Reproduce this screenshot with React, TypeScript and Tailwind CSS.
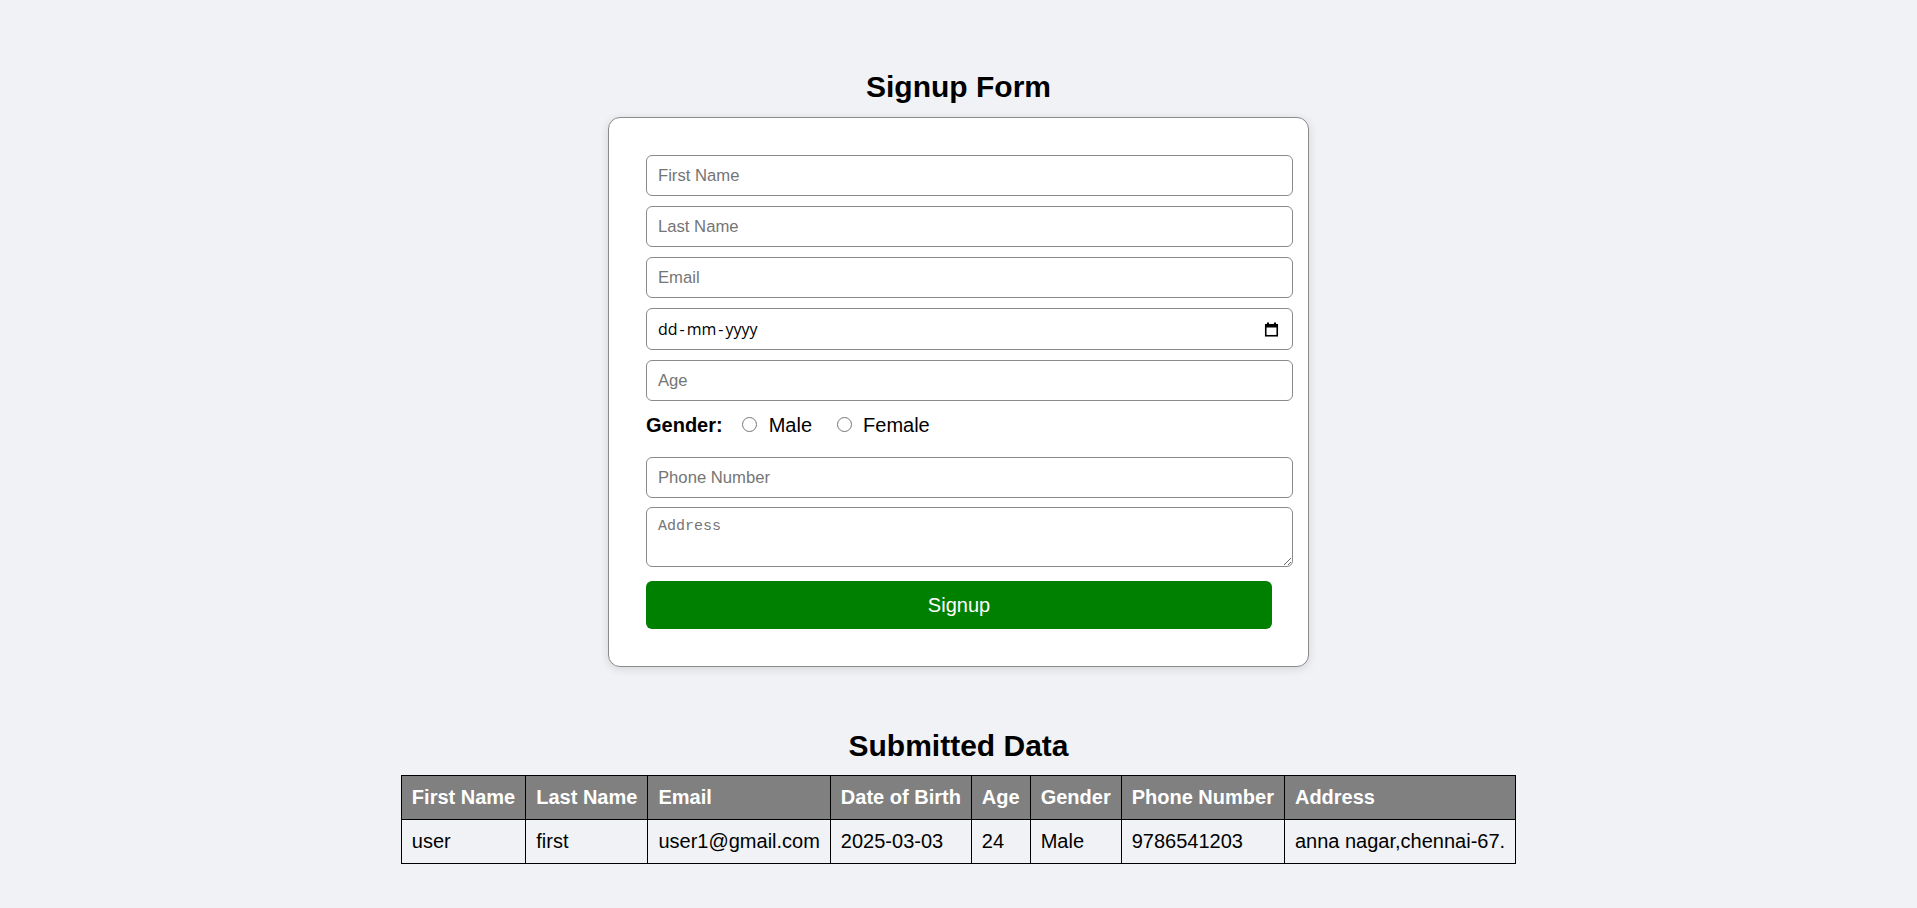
import React from "react";

const headers = [
  "First Name",
  "Last Name",
  "Email",
  "Date of Birth",
  "Age",
  "Gender",
  "Phone Number",
  "Address",
];

const row = [
  "user",
  "first",
  "user1@gmail.com",
  "2025-03-03",
  "24",
  "Male",
  "9786541203",
  "anna nagar,chennai-67.",
];

function TextInput({ placeholder }: { placeholder: string }) {
  return (
    <input
      type="text"
      placeholder={placeholder}
      className="block h-[41px] w-full rounded-[6px] border border-[#8a8a8a] bg-white px-[11px] text-[16.67px] text-black outline-none placeholder:text-[#757575] font-['Liberation_Sans',Arial,sans-serif]"
    />
  );
}

function CalendarIcon() {
  return (
    <svg width="15" height="15" viewBox="0 0 15 15" aria-hidden="true">
      <rect x="3" y="0.5" width="2" height="3" fill="#000" />
      <rect x="10" y="0.5" width="2" height="3" fill="#000" />
      <rect x="1.75" y="2.75" width="11.5" height="11" fill="none" stroke="#000" strokeWidth="1.6" />
      <rect x="1.5" y="2.5" width="12" height="3" fill="#000" />
    </svg>
  );
}

function Radio() {
  return (
    <span className="mb-[3px] inline-block h-[15px] w-[15px] rounded-full border border-[#767676] bg-white" />
  );
}

export default function App() {
  return (
    <div className="flex min-h-screen flex-col items-center bg-[#f0f2f5] pb-[40px] pt-[70px] font-['Liberation_Sans',Arial,sans-serif] text-black">
      <h2 className="text-[30px] font-bold leading-[34px]">Signup Form</h2>

      <div className="mt-[13px] w-[701px] rounded-[12px] border border-[#8a8a8a] bg-white pb-[37px] pl-[37px] pr-[15px] pt-[37px] shadow-[0_2px_10px_rgba(0,0,0,0.12)]">
        <div className="flex flex-col gap-[10px]">
          <TextInput placeholder="First Name" />
          <TextInput placeholder="Last Name" />
          <TextInput placeholder="Email" />
          <div className="flex h-[42px] w-full items-center justify-between rounded-[6px] border border-[#8a8a8a] bg-white pl-[11px] pr-[13px]">
            <span className="flex items-center text-[16px] text-black font-['Open_Sans','Noto_Sans',sans-serif]">
              <span>dd</span>
              <span className="px-[2px]">-</span>
              <span>mm</span>
              <span className="px-[2px]">-</span>
              <span>yyyy</span>
            </span>
            <CalendarIcon />
          </div>
          <TextInput placeholder="Age" />
        </div>

        <div className="mb-[19px] mt-[12px] flex h-[25px] items-center text-[20px] leading-[25px]">
          <span className="font-bold">Gender:</span>
          <span className="ml-[19px] flex items-center">
            <Radio />
          </span>
          <span className="ml-[12px]">Male</span>
          <span className="ml-[25px] flex items-center">
            <Radio />
          </span>
          <span className="ml-[11px]">Female</span>
        </div>

        <TextInput placeholder="Phone Number" />

        <textarea
          placeholder="Address"
          className="mt-[9px] block h-[60px] w-full rounded-[6px] border border-[#8a8a8a] bg-white px-[11px] py-[9px] text-[15px] leading-[19px] text-black outline-none placeholder:text-[#757575] font-['Liberation_Mono','DejaVu_Sans_Mono',monospace]"
        />

        <button
          type="button"
          className="mt-[14px] flex h-[48px] w-[626px] items-center justify-center rounded-[6px] bg-[#008000] text-[20px] text-white"
        >
          Signup
        </button>
      </div>

      <h2 className="mt-[62px] text-[30px] font-bold leading-[34px]">Submitted Data</h2>

      <table className="mt-[12px] border-collapse text-[20px] leading-[23px]">
        <thead>
          <tr>
            {headers.map((h) => (
              <th
                key={h}
                className="border border-black bg-[#808080] px-[10px] py-[10px] text-left font-bold text-white"
              >
                {h}
              </th>
            ))}
          </tr>
        </thead>
        <tbody>
          <tr>
            {row.map((c, i) => (
              <td key={i} className="border border-black px-[10px] py-[10px] text-left">
                {c}
              </td>
            ))}
          </tr>
        </tbody>
      </table>
    </div>
  );
}
